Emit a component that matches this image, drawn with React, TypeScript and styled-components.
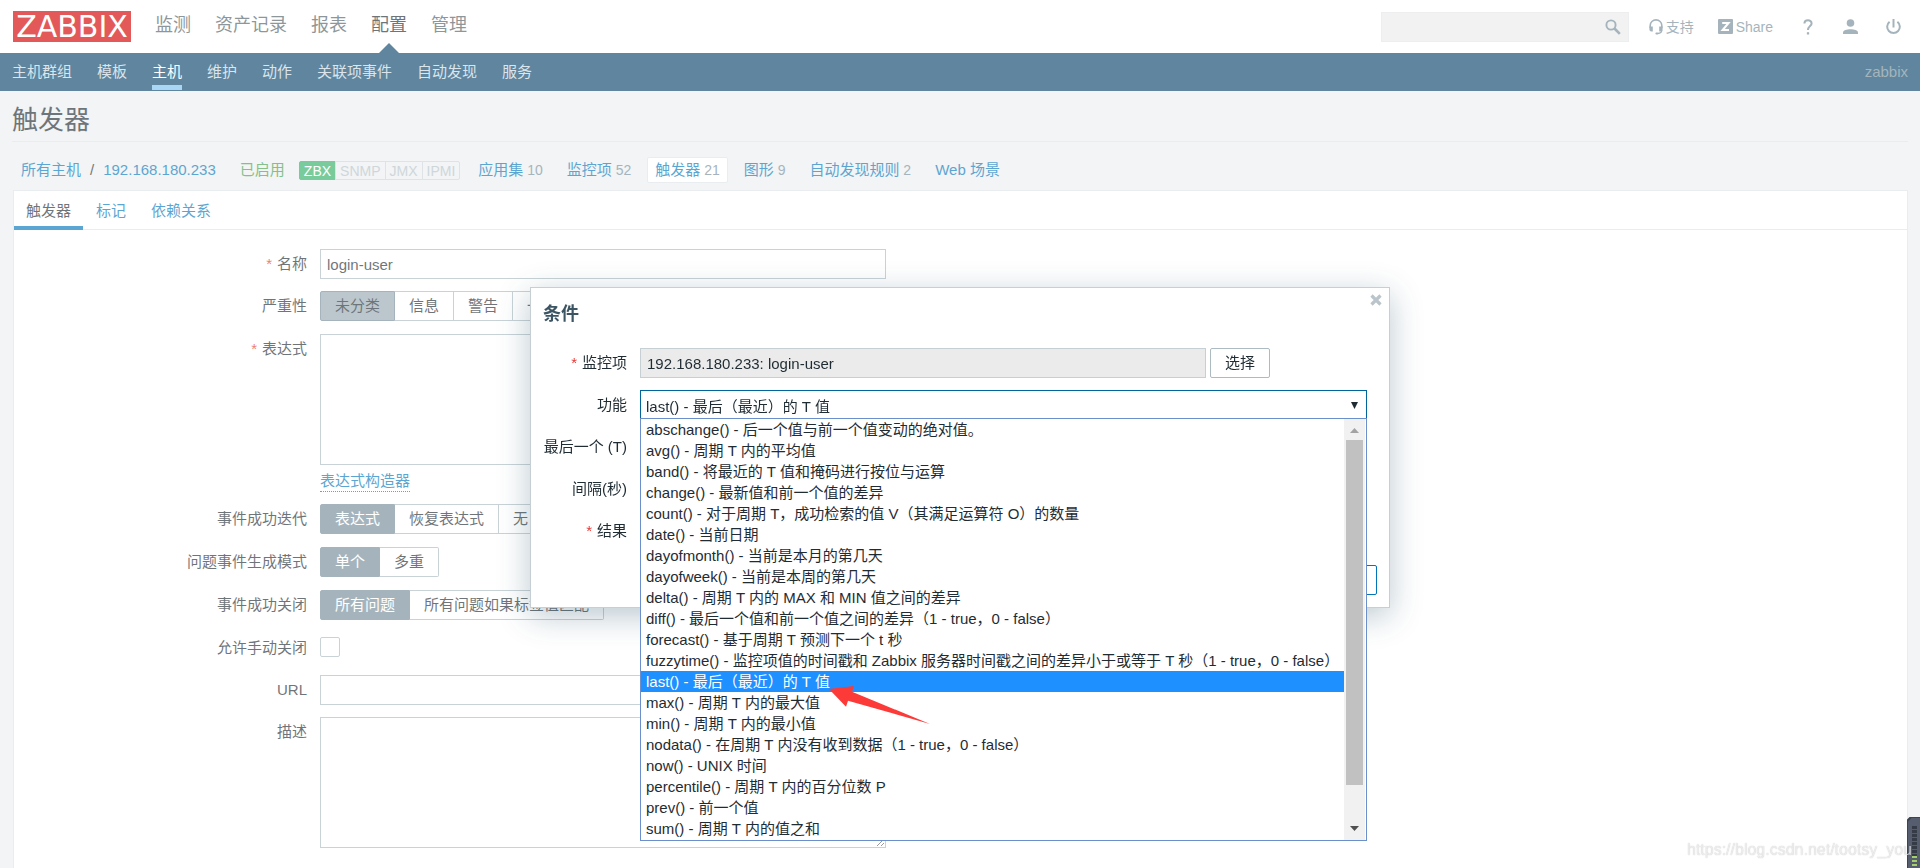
import React from 'react';
import styled, { createGlobalStyle, css } from 'styled-components';

const c = {
  text: '#1f2c33',
  link: '#0275b8',
  muted: '#768d99',
  border: '#acbbc2',
  soft: '#dfe4e7',
  nav: '#0a466a',
};

const Global = createGlobalStyle`
  *, *::before, *::after { box-sizing: border-box; }
  body { margin: 0; background: #ebeef0; color: ${c.text}; }
  body, button, input, textarea, select {
    font-family: "Liberation Sans", Arial, "Noto Sans CJK SC", sans-serif;
    font-size: 15px;
    line-height: 20px;
  }
  a { color: ${c.link}; text-decoration: none; }
  ul { list-style: none; margin: 0; padding: 0; }
`;

const Page = styled.div`
  display: flex;
  flex-direction: column;
  min-height: 100vh;
`;

/* Header */
const Header = styled.header`
  display: flex;
  align-items: center;
  height: 53px;
  padding: 0 12px 0 13px;
  background: #fff;
`;
const Logo = styled.a`
  display: flex;
  align-items: center;
  justify-content: center;
  width: 118px;
  height: 31px;
  margin-right: 24px;
  background: #d40000;
  color: #fff;
  font: 30px/30px "DejaVu Sans", sans-serif;
`;
const MainMenu = styled.nav`
  display: flex;
  flex: 1;
  gap: 24px;
  align-self: stretch;
`;
const MainLink = styled.a<{ $on?: boolean }>`
  position: relative;
  padding-top: 13px;
  font-size: 18px;
  line-height: 24px;
  color: ${(p) => (p.$on ? c.text : '#4f5f66')};
  ${(p) =>
    p.$on &&
    css`
      &::after {
        content: '';
        position: absolute;
        left: 50%;
        bottom: 0;
        margin-left: -10px;
        border: 10px solid transparent;
        border-top: 0;
        border-bottom-color: ${c.nav};
      }
    `}
`;
const Tools = styled.div`
  display: flex;
  align-items: center;
  color: ${c.muted};
`;
const Search = styled.label`
  display: flex;
  align-items: center;
  width: 248px;
  height: 30px;
  padding-right: 7px;
  margin-right: 20px;
  background: #ebebeb;
  border: 1px solid #e3e5e6;
  input {
    flex: 1;
    min-width: 0;
    border: 0;
    background: transparent;
    outline: 0;
  }
`;
const ToolLink = styled.a<{ $gap: number }>`
  display: flex;
  align-items: center;
  gap: 3px;
  margin-right: ${(p) => p.$gap}px;
  color: ${c.muted};
  font-size: 14px;
  svg { display: block; }
`;

const SubNav = styled.nav`
  display: flex;
  gap: 25px;
  height: 38px;
  padding: 0 12px;
  background: ${c.nav};
`;
const SubLink = styled.a<{ $on?: boolean }>`
  height: 37px;
  padding-top: 9px;
  color: ${(p) => (p.$on ? '#fff' : '#c8d7e0')};
  border-bottom: 5px solid ${(p) => (p.$on ? '#7cc1ee' : 'transparent')};
`;
const ServerName = styled.span`
  margin-left: auto;
  padding-top: 9px;
  color: #768d99;
`;

/* Title and host bar */
const Title = styled.h1`
  margin: 0 12px;
  padding: 14px 0 6px;
  font-size: 26px;
  line-height: 30px;
  font-weight: 400;
  border-bottom: 1px solid ${c.soft};
`;
const HostBar = styled.div`
  display: flex;
  align-items: center;
  height: 48px;
  padding: 8px 21px 0;
  white-space: nowrap;
`;
const Slash = styled.span`
  padding: 0 9px;
`;
const Enabled = styled.span`
  margin: 0 14px 0 24px;
  color: #429e47;
`;
const Badges = styled.span`
  display: flex;
  height: 19px;
  margin-right: 10px;
  font-size: 14px;
  line-height: 18px;
`;
const Badge = styled.span<{ $on?: boolean }>`
  padding: 0 4px;
  border: 1px solid ${(p) => (p.$on ? '#34af67' : '#ccd5d9')};
  margin-left: -1px;
  background: ${(p) => (p.$on ? '#34af67' : '#ebeef0')};
  color: ${(p) => (p.$on ? '#fff' : '#b5c1c7')};
  &:first-child { border-radius: 2px 0 0 2px; margin-left: 0; }
  &:last-child { border-radius: 0 2px 2px 0; }
`;
const HostLinks = styled.nav`
  display: flex;
  gap: 8px;
`;
const HostLink = styled.a<{ $on?: boolean }>`
  padding: 2px 7px;
  border: 1px solid ${(p) => (p.$on ? c.soft : 'transparent')};
  border-radius: 2px;
  background: ${(p) => (p.$on ? '#fff' : 'transparent')};
  sup {
    vertical-align: baseline;
    font-size: 14px;
    line-height: 14px;
    color: ${c.muted};
  }
`;

/* Panel with the trigger form */
const Panel = styled.main`
  flex: 1;
  margin: 0 12px 0 13px;
  background: #fff;
  border: 1px solid ${c.soft};
  border-bottom: 0;
`;
const Tabs = styled.nav`
  display: flex;
  gap: 1px;
  height: 39px;
  border-bottom: 1px solid ${c.soft};
`;
const Tab = styled.a<{ $on?: boolean }>`
  height: 39px;
  padding: 10px 12px 0;
  color: ${(p) => (p.$on ? c.text : c.link)};
  border-bottom: 4px solid ${(p) => (p.$on ? c.link : 'transparent')};
`;
const Form = styled.form`
  display: flex;
  flex-direction: column;
  gap: 12px;
  padding: 19px 0 20px;
`;
const Row = styled.div<{ $label: number; $height?: number }>`
  display: grid;
  grid-template-columns: ${(p) => p.$label}px minmax(0, 1fr);
  column-gap: 13px;
  min-height: ${(p) => p.$height || 30}px;
`;
const Label = styled.label<{ $required?: boolean }>`
  padding-top: 5px;
  text-align: right;
  white-space: nowrap;
  ${(p) =>
    p.$required &&
    css`
      &::before {
        content: '*';
        margin-right: 5px;
        color: #e33734;
      }
    `}
`;
const field = css`
  display: block;
  width: 566px;
  margin: 0;
  border: 1px solid ${c.border};
  border-radius: 0;
  color: ${c.text};
  outline: 0;
`;
const TextInput = styled.input`
  ${field}
  height: 30px;
  padding: 0 6px;
  background: #fff;
  &:read-only { background: #ebebeb; border-color: #c6d0d4; }
`;
const TextArea = styled.textarea`
  ${field}
  height: 131px;
  padding: 4px 6px;
  background: #fff;
`;
const Builder = styled.button`
  display: block;
  height: 21px;
  margin-top: 6px;
  padding: 0;
  border: 0;
  border-bottom: 1px dotted ${c.link};
  background: transparent;
  color: ${c.link};
`;
const Segments = styled.div`
  display: flex;
  height: 30px;
`;
const Segment = styled.label<{ $severity?: boolean }>`
  padding: 4px 14px;
  border: 1px solid ${c.border};
  border-left-width: 0;
  background: #fff;
  white-space: nowrap;
  &:first-child { border-left-width: 1px; border-radius: 2px 0 0 2px; }
  &:last-child { border-radius: 0 2px 2px 0; }
  input {
    position: absolute;
    opacity: 0;
    pointer-events: none;
  }
  &:has(input:checked) {
    background: ${(p) => (p.$severity ? '#97aab3' : c.muted)};
    border-color: ${c.muted};
    color: ${(p) => (p.$severity ? c.text : '#fff')};
  }
`;
const Check = styled.input`
  appearance: none;
  width: 20px;
  height: 20px;
  margin: 4px 0 0;
  border: 1px solid ${c.border};
  border-radius: 2px;
  background: #fff;
`;

/* Condition dialog */
const Shade = styled.div`
  position: fixed;
  inset: 0;
  display: flex;
  justify-content: center;
  align-items: flex-start;
  padding-top: 287px;
  background: rgba(255, 255, 255, 0.35);
`;
const Dialog = styled.section`
  position: relative;
  width: 860px;
  padding: 16px 12px 12px;
  background: #fff;
  border: 1px solid #c6d0d4;
  box-shadow: 0 8px 30px rgba(31, 74, 95, 0.3);
`;
const DialogTitle = styled.h2`
  margin: 0 0 24px;
  font-size: 18px;
  line-height: 20px;
  color: #3c5563;
  font-weight: 700;
`;
const Close = styled.button`
  position: absolute;
  top: 5px;
  right: 6px;
  padding: 1px;
  border: 0;
  background: transparent;
  svg { display: block; }
`;
const DialogForm = styled.form`
  display: flex;
  flex-direction: column;
  gap: 12px;
`;
const Inline = styled.div`
  display: flex;
  gap: 4px;
`;
const Button = styled.button<{ $main?: boolean }>`
  height: 30px;
  padding: 0 14px;
  border: 1px solid ${(p) => (p.$main ? c.link : c.border)};
  border-radius: 2px;
  background: #fff;
  color: ${(p) => (p.$main ? c.link : c.text)};
`;
const Footer = styled.footer`
  display: flex;
  justify-content: flex-end;
  gap: 12px;
  margin-top: 7px;
`;
const SelectWrap = styled.div`
  position: relative;
  width: 727px;
`;
const Select = styled.select`
  appearance: none;
  display: block;
  width: 100%;
  height: 30px;
  padding: 4px 5px 0;
  border: 1px solid #00659c;
  border-radius: 0;
  background: #fff;
  color: ${c.text};
  outline: 0;
`;
const Caret = styled.svg`
  position: absolute;
  top: 12px;
  right: 9px;
`;
const Dropdown = styled.div`
  position: absolute;
  z-index: 1;
  top: 28px;
  left: 0;
  display: flex;
  width: 100%;
  height: 423px;
  background: #fff;
  border: 1px solid #6b8fcb;
`;
const Options = styled.ul`
  flex: 1;
  min-width: 0;
`;
const Option = styled.li<{ $on: boolean }>`
  padding: 0 5px;
  line-height: 21px;
  height: 21px;
  white-space: nowrap;
  background: ${(p) => (p.$on ? '#1e90ff' : 'transparent')};
  color: ${(p) => (p.$on ? '#fff' : c.text)};
`;
const Scrollbar = styled.div`
  display: flex;
  flex-direction: column;
  align-items: center;
  justify-content: space-between;
  width: 21px;
  margin-right: 1px;
  padding: 9px 0 9px;
  background: #f1f1f1;
  svg { display: block; flex: none; }
`;
const Thumb = styled.div`
  width: 17px;
  height: 345px;
  margin: 7px 0 auto;
  background: #c1c1c1;
`;
const Pointer = styled.svg`
  position: absolute;
  left: 187px;
  top: 266px;
`;

const Watermark = styled.div`
  position: fixed;
  right: 8px;
  bottom: 8px;
  z-index: 3;
  font-size: 16px;
  color: rgba(255, 255, 255, 0.7);
  text-shadow: 0 0 1px rgba(0, 0, 0, 0.3);
`;
const Meter = styled.svg`
  position: fixed;
  right: 0;
  bottom: 0;
  z-index: 2;
`;

const options = [
  'abschange() - 后一个值与前一个值变动的绝对值。',
  'avg() - 周期 T 内的平均值',
  'band() - 将最近的 T 值和掩码进行按位与运算',
  'change() - 最新值和前一个值的差异',
  'count() - 对于周期 T，成功检索的值 V（其满足运算符 O）的数量',
  'date() - 当前日期',
  'dayofmonth() - 当前是本月的第几天',
  'dayofweek() - 当前是本周的第几天',
  'delta() - 周期 T 内的 MAX 和 MIN 值之间的差异',
  'diff() - 最后一个值和前一个值之间的差异（1 - true，0 - false）',
  'forecast() - 基于周期 T 预测下一个 t 秒',
  'fuzzytime() - 监控项值的时间戳和 Zabbix 服务器时间戳之间的差异小于或等于 T 秒（1 - true，0 - false）',
  'last() - 最后（最近）的 T 值',
  'max() - 周期 T 内的最大值',
  'min() - 周期 T 内的最小值',
  'nodata() - 在周期 T 内没有收到数据（1 - true，0 - false）',
  'now() - UNIX 时间',
  'percentile() - 周期 T 内的百分位数 P',
  'prev() - 前一个值',
  'sum() - 周期 T 内的值之和',
];
const current = options[12];

const hostLinks: [string, string][] = [
  ['应用集', '10'],
  ['监控项', '52'],
  ['触发器', '21'],
  ['图形', '9'],
  ['自动发现规则', '2'],
  ['Web 场景', ''],
];

function Choice({ name, items, severity }: { name: string; items: string[]; severity?: boolean }) {
  return (
    <Segments role="radiogroup" aria-label={name}>
      {items.map((item, i) => (
        <Segment key={item} $severity={severity}>
          <input type="radio" name={name} defaultChecked={i === 0} />
          {item}
        </Segment>
      ))}
    </Segments>
  );
}

export default function App() {
  return (
    <>
      <Global />
      <Page>
        <Header>
          <Logo href="#">ZABBIX</Logo>
          <MainMenu>
            {['监测', '资产记录', '报表', '配置', '管理'].map((m) => (
              <MainLink key={m} href="#" $on={m === '配置'}>{m}</MainLink>
            ))}
          </MainMenu>
          <Tools>
            <Search>
              <input type="text" aria-label="搜索" />
              <svg width="16" height="16" viewBox="0 0 16 16" fill="none" stroke={c.muted}>
                <circle cx="6" cy="6" r="4.6" strokeWidth="1.9" />
                <path d="M9.5 9.5l5.3 5.3" strokeWidth="2.6" />
              </svg>
            </Search>
            <ToolLink href="#" $gap={24}>
              <svg width="14" height="16" viewBox="0 0 14 16" fill={c.muted}>
                <path d="M1.2 9V6.5a5.8 5.6 0 0 1 11.6 0V9" fill="none" stroke={c.muted} strokeWidth="1.6" />
                <path d="M.4 7.5h3.4v5H2.4a2 2 0 0 1-2-2zM10.2 7.5h3.4v3a2 2 0 0 1-2 2h-1.4z" />
                <path d="M12.8 11c0 2.5-1.5 3.4-4 3.5" fill="none" stroke={c.muted} strokeWidth="1.3" />
                <rect x="6.4" y="13.4" width="3" height="2.2" rx="1" />
              </svg>
              支持
            </ToolLink>
            <ToolLink href="#" $gap={30}>
              <svg width="15" height="15" viewBox="0 0 15 15">
                <rect width="15" height="15" rx="1" fill={c.muted} />
                <path d="M4.2 3.9h6.4L4.6 11.1h6.4" fill="none" stroke="#fff" strokeWidth="2" />
              </svg>
              Share
            </ToolLink>
            <ToolLink href="#" $gap={30} aria-label="帮助">
              <svg width="10" height="16" viewBox="0 0 10 16" fill="none" stroke={c.muted} strokeWidth="2">
                <path d="M1.4 4.6C1.4 .2 8.6 .3 8.6 4.4 8.6 7 5 7.2 5 11" />
                <path d="M5 13.2v2.3" strokeWidth="2.3" />
              </svg>
            </ToolLink>
            <ToolLink href="#" $gap={28} aria-label="用户">
              <svg width="15" height="15" viewBox="0 0 15 15" fill={c.muted}>
                <circle cx="7.5" cy="4" r="3.8" />
                <path d="M0 15v-1.5C0 9.3 15 9.3 15 13.5V15z" />
              </svg>
            </ToolLink>
            <ToolLink href="#" $gap={7} aria-label="退出">
              <svg width="15" height="16" viewBox="0 0 15 16" fill="none" stroke={c.muted} strokeWidth="2">
                <path d="M7.5 0v8.5" />
                <path d="M3.600 2.800a6.300 6.300 0 1 0 7.800 0" />
              </svg>
            </ToolLink>
          </Tools>
        </Header>
        <SubNav>
          {['主机群组', '模板', '主机', '维护', '动作', '关联项事件', '自动发现', '服务'].map((m) => (
            <SubLink key={m} href="#" $on={m === '主机'}>{m}</SubLink>
          ))}
          <ServerName>zabbix</ServerName>
        </SubNav>

        <Title>触发器</Title>
        <HostBar>
          <a href="#">所有主机</a>
          <Slash>/</Slash>
          <a href="#">192.168.180.233</a>
          <Enabled>已启用</Enabled>
          <Badges>
            <Badge $on>ZBX</Badge>
            <Badge>SNMP</Badge>
            <Badge>JMX</Badge>
            <Badge>IPMI</Badge>
          </Badges>
          <HostLinks>
            {hostLinks.map(([name, count]) => (
              <HostLink key={name} href="#" $on={name === '触发器'}>
                {name}
                {count && <sup> {count}</sup>}
              </HostLink>
            ))}
          </HostLinks>
        </HostBar>

        <Panel>
          <Tabs>
            <Tab href="#" $on>触发器</Tab>
            <Tab href="#">标记</Tab>
            <Tab href="#">依赖关系</Tab>
          </Tabs>
          <Form>
            <Row $label={293}>
              <Label htmlFor="name" $required>名称</Label>
              <TextInput id="name" type="text" defaultValue="login-user" />
            </Row>
            <Row $label={293} $height={31}>
              <Label as="span">严重性</Label>
              <Choice name="severity" severity items={['未分类', '信息', '警告', '一般严重', '严重', '灾难']} />
            </Row>
            <Row $label={293}>
              <Label htmlFor="expression" $required>表达式</Label>
              <div>
                <TextArea id="expression" />
                <Builder type="button">表达式构造器</Builder>
              </div>
            </Row>
            <Row $label={293} $height={31}>
              <Label as="span">事件成功迭代</Label>
              <Choice name="recovery" items={['表达式', '恢复表达式', '无']} />
            </Row>
            <Row $label={293} $height={31}>
              <Label as="span">问题事件生成模式</Label>
              <Choice name="mode" items={['单个', '多重']} />
            </Row>
            <Row $label={293} $height={31}>
              <Label as="span">事件成功关闭</Label>
              <Choice name="closes" items={['所有问题', '所有问题如果标签值匹配']} />
            </Row>
            <Row $label={293}>
              <Label htmlFor="manual">允许手动关闭</Label>
              <Check id="manual" type="checkbox" />
            </Row>
            <Row $label={293}>
              <Label htmlFor="url">URL</Label>
              <TextInput id="url" type="text" />
            </Row>
            <Row $label={293}>
              <Label htmlFor="description">描述</Label>
              <TextArea id="description" />
            </Row>
          </Form>
        </Panel>
      </Page>

      <Shade>
        <Dialog role="dialog" aria-labelledby="dialog-title">
          <Close type="button" aria-label="关闭">
            <svg width="12" height="12" viewBox="0 0 12 12" stroke="#bac5cb" strokeWidth="3.2">
              <path d="M1.5 1.5l9 9M10.5 1.5l-9 9" />
            </svg>
          </Close>
          <DialogTitle id="dialog-title">条件</DialogTitle>
          <DialogForm>
            <Row $label={84}>
              <Label htmlFor="item" $required>监控项</Label>
              <Inline>
                <TextInput id="item" type="text" readOnly value="192.168.180.233: login-user" />
                <Button type="button">选择</Button>
              </Inline>
            </Row>
            <Row $label={84}>
              <Label htmlFor="function">功能</Label>
              <SelectWrap>
                <Select id="function" defaultValue={current}>
                  {options.map((o) => <option key={o}>{o}</option>)}
                </Select>
                <Caret width="7" height="7" viewBox="0 0 7 7" fill={c.text}>
                  <path d="M0 0h7L3.5 7z" />
                </Caret>
                <Dropdown>
                  <Options role="listbox" aria-label="功能">
                    {options.map((o) => (
                      <Option key={o} role="option" aria-selected={o === current} $on={o === current}>{o}</Option>
                    ))}
                  </Options>
                  <Scrollbar>
                    <svg width="9" height="5" viewBox="0 0 9 5" fill="#a3a3a3"><path d="M0 5h9L4.5 0z" /></svg>
                    <Thumb />
                    <svg width="9" height="5" viewBox="0 0 9 5" fill="#505050"><path d="M0 0h9L4.5 5z" /></svg>
                  </Scrollbar>
                  <Pointer width="102" height="40" viewBox="828 685 102 40" fill="#fc3a38">
                    <path d="M829 689L854 686L852 691.7L930 724L848 700.7L846 706.7z" />
                  </Pointer>
                </Dropdown>
              </SelectWrap>
            </Row>
            <Row $label={84}>
              <Label htmlFor="last">最后一个 (T)</Label>
              <TextInput id="last" type="text" />
            </Row>
            <Row $label={84}>
              <Label htmlFor="shift">间隔(秒)</Label>
              <TextInput id="shift" type="text" />
            </Row>
            <Row $label={84}>
              <Label htmlFor="result" $required>结果</Label>
              <TextInput id="result" type="text" />
            </Row>
            <Footer>
              <Button type="button" $main>取消</Button>
            </Footer>
          </DialogForm>
        </Dialog>
      </Shade>

      <Meter width="13" height="51" viewBox="0 0 13 51" aria-hidden="true">
        <path d="M0 51V4L4 0H13V51z" fill="#565d6e" />
        <path d="M0 51V4L4 0H13" fill="none" stroke="#3d4350" strokeWidth="2" />
        <path d="M7.5 9v30" stroke="#363b48" strokeWidth="5" strokeDasharray="3 1" />
        <path d="M7.5 39v12" stroke="#a4cf6c" strokeWidth="5" strokeDasharray="2 2" />
      </Meter>
      <Watermark>https://blog.csdn.net/tootsy_you</Watermark>
    </>
  );
}
